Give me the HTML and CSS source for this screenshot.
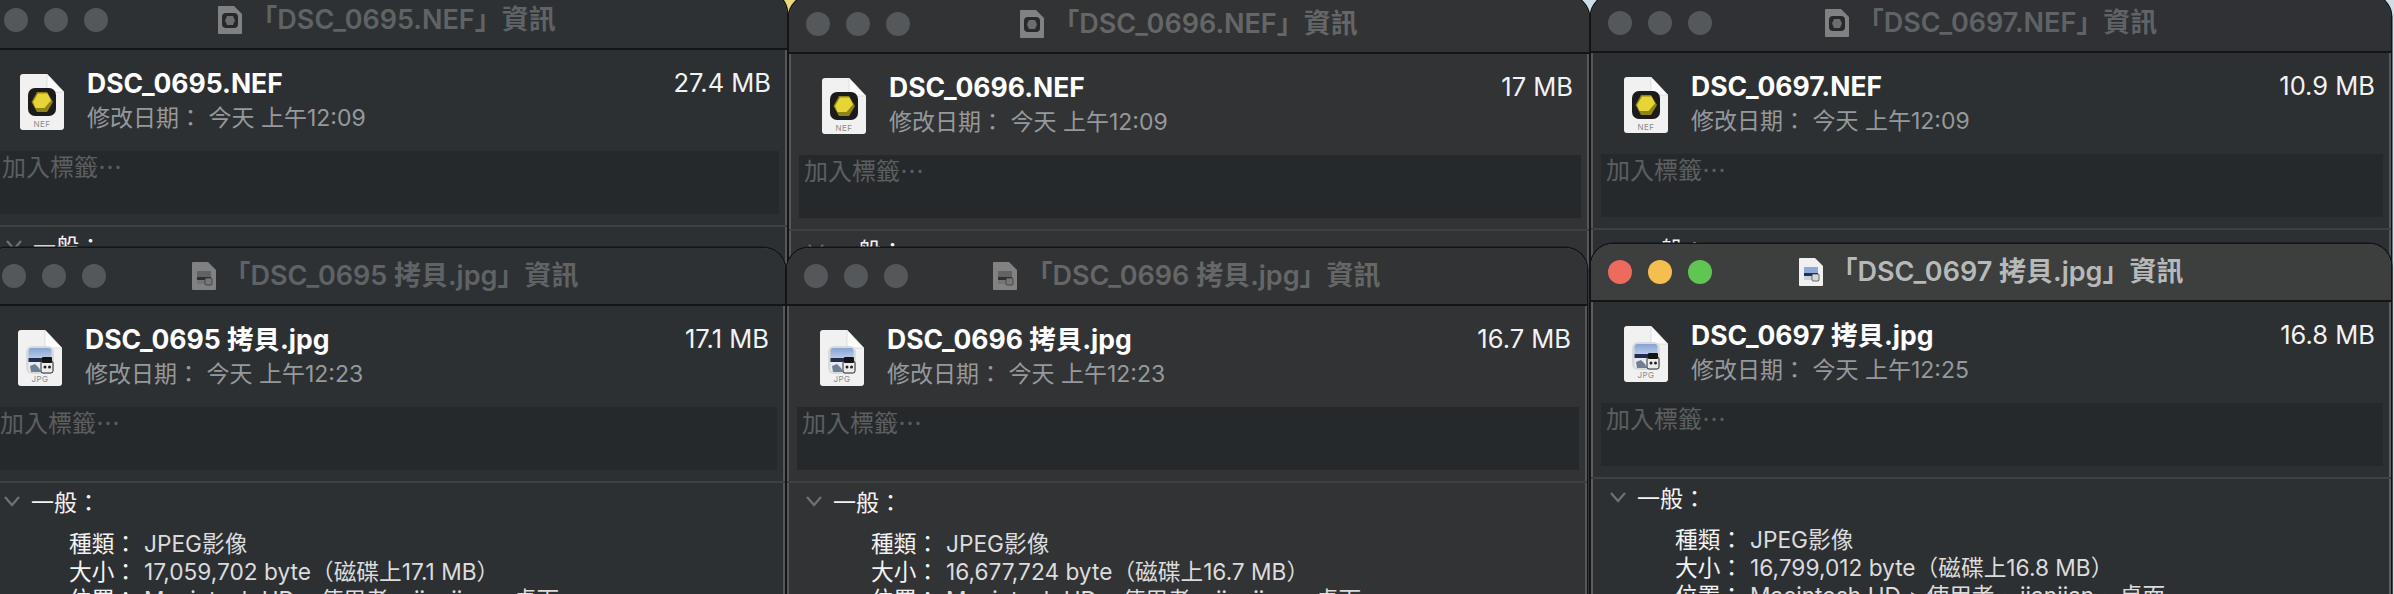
FILE: index.html
```html
<!DOCTYPE html>
<html lang="zh-Hant">
<head>
<meta charset="utf-8">
<title>資訊視窗</title>
<link rel="stylesheet" href="styles.css">
</head>
<body>
<svg class="defs" width="0" height="0" aria-hidden="true">
  <defs>
    <linearGradient id="sky" x1="0" y1="0" x2="0" y2="1">
      <stop offset="0" stop-color="#86a2d6"/>
      <stop offset="1" stop-color="#c5d3ea"/>
    </linearGradient>
    <symbol id="nef" viewBox="0 0 44 56">
      <path d="M2 0H27L44 18V53a3 3 0 0 1-3 3H3a3 3 0 0 1-3-3V3a3 3 0 0 1 3-3Z" fill="#f1f1f1"/>
      <path d="M27 0L44 18H30a3 3 0 0 1-3-3Z" fill="#fcfcfc" stroke="#cfcfcf" stroke-width=".6"/>
      <rect x="8" y="14" width="28" height="28" rx="7" fill="#1c1c1c"/>
      <path d="M17 18H27L33 28L27 38H17L11.500 28Z" fill="#8f8517"/>
      <path d="M18 19.500H27.500L31 26.500L24.500 34H15.500L13 28Z" fill="#e6d534"/>
      <text class="ext" x="22" y="53" text-anchor="middle">NEF</text>
    </symbol>
    <symbol id="jpg" viewBox="0 0 44 56">
      <path d="M2 0H27L44 18V53a3 3 0 0 1-3 3H3a3 3 0 0 1-3-3V3a3 3 0 0 1 3-3Z" fill="#f1f1f1"/>
      <path d="M27 0L44 18H30a3 3 0 0 1-3-3Z" fill="#fcfcfc" stroke="#cfcfcf" stroke-width=".6"/>
      <rect x="8" y="16" width="28" height="28" rx="6" fill="#d9dadc"/>
      <rect x="10.500" y="18" width="23" height="12" rx="3" fill="url(#sky)"/>
      <rect x="10.500" y="28" width="23" height="4" fill="#1f2f4d"/>
      <path d="M10.500 32H24V42H13a2.500 2.500 0 0 1-2.500-2.500Z" fill="#e7ebf0"/>
      <path d="M12 36L17 34L21 38L23 42H13Z" fill="#6f7f96"/>
      <rect x="23" y="31" width="12" height="12" rx="2" fill="#ececec" stroke="#2b2b2b" stroke-width="1"/>
      <rect x="24" y="27" width="10" height="6" rx="1" fill="#141414"/>
      <circle cx="27" cy="37" r="1.500" fill="#222"/>
      <circle cx="31.500" cy="37" r="1.500" fill="#222"/>
      <text class="ext" x="22" y="52" text-anchor="middle">JPG</text>
    </symbol>
    <symbol id="nef-mini" viewBox="0 0 24 28">
      <path d="M1 0H16L24 8V27a1 1 0 0 1-1 1H1a1 1 0 0 1-1-1V1a1 1 0 0 1 1-1Z" fill="#f0f0f0"/>
      <rect x="4" y="7" width="16" height="15" rx="4" fill="#1c1c1c"/>
      <path d="M9 10H15L17 14.500L15 19H9L7 14.500Z" fill="#d8c82e"/>
    </symbol>
    <symbol id="jpg-mini" viewBox="0 0 24 28">
      <path d="M1 0H16L24 8V27a1 1 0 0 1-1 1H1a1 1 0 0 1-1-1V1a1 1 0 0 1 1-1Z" fill="#f0f0f0"/>
      <rect x="5" y="9" width="14" height="8" fill="#8fa9db"/>
      <rect x="5" y="15" width="14" height="3" fill="#20324f"/>
      <rect x="5" y="18" width="9" height="4" fill="#c9d2df"/>
      <rect x="13" y="16" width="7" height="7" rx="1" fill="#d8d8d8" stroke="#333" stroke-width=".7"/>
    </symbol>
    <symbol id="chev" viewBox="0 0 18 12">
      <path d="M2 2L9 10L16 2" fill="none" stroke="currentColor" stroke-width="2.200"/>
    </symbol>
  </defs>
</svg>

<main class="desktop">
  <section class="win w1">
    <header class="titlebar">
      <div class="lights"><i class="dot"></i><i class="dot"></i><i class="dot"></i></div>
      <h1 class="title"><svg class="mini"><use href="#nef-mini"/></svg>「DSC_0695.NEF」資訊</h1>
    </header>
    <div class="head">
      <svg class="doc"><use href="#nef"/></svg>
      <div class="info"><strong class="name">DSC_0695.NEF</strong><span class="date">修改日期： 今天 上午12:09</span></div>
      <span class="size">27.4 MB</span>
    </div>
    <div class="tags">加入標籤⋯</div>
    <hr class="rule">
    <div class="section"><svg class="chev"><use href="#chev"/></svg>一般：</div>
  </section>

  <section class="win w2">
    <header class="titlebar">
      <div class="lights"><i class="dot"></i><i class="dot"></i><i class="dot"></i></div>
      <h1 class="title"><svg class="mini"><use href="#nef-mini"/></svg>「DSC_0696.NEF」資訊</h1>
    </header>
    <div class="head">
      <svg class="doc"><use href="#nef"/></svg>
      <div class="info"><strong class="name">DSC_0696.NEF</strong><span class="date">修改日期： 今天 上午12:09</span></div>
      <span class="size">17 MB</span>
    </div>
    <div class="tags">加入標籤⋯</div>
    <hr class="rule">
    <div class="section"><svg class="chev"><use href="#chev"/></svg>一般：</div>
  </section>

  <section class="win w3">
    <header class="titlebar">
      <div class="lights"><i class="dot"></i><i class="dot"></i><i class="dot"></i></div>
      <h1 class="title"><svg class="mini"><use href="#nef-mini"/></svg>「DSC_0697.NEF」資訊</h1>
    </header>
    <div class="head">
      <svg class="doc"><use href="#nef"/></svg>
      <div class="info"><strong class="name">DSC_0697.NEF</strong><span class="date">修改日期： 今天 上午12:09</span></div>
      <span class="size">10.9 MB</span>
    </div>
    <div class="tags">加入標籤⋯</div>
    <hr class="rule">
    <div class="section"><svg class="chev"><use href="#chev"/></svg>一般：</div>
  </section>

  <section class="win w4">
    <header class="titlebar">
      <div class="lights"><i class="dot"></i><i class="dot"></i><i class="dot"></i></div>
      <h1 class="title"><svg class="mini"><use href="#jpg-mini"/></svg>「DSC_0695 拷貝.jpg」資訊</h1>
    </header>
    <div class="head">
      <svg class="doc"><use href="#jpg"/></svg>
      <div class="info"><strong class="name">DSC_0695 拷貝.jpg</strong><span class="date">修改日期： 今天 上午12:23</span></div>
      <span class="size">17.1 MB</span>
    </div>
    <div class="tags">加入標籤⋯</div>
    <hr class="rule">
    <div class="section"><svg class="chev"><use href="#chev"/></svg>一般：</div>
    <dl class="props">
      <dt>種類：</dt><dd>JPEG影像</dd>
      <dt>大小：</dt><dd>17,059,702 byte（磁碟上17.1 MB）</dd>
      <dt>位置：</dt><dd>Macintosh HD ‣ 使用者 ‣ jianjian ‣ 桌面</dd>
    </dl>
  </section>

  <section class="win w5">
    <header class="titlebar">
      <div class="lights"><i class="dot"></i><i class="dot"></i><i class="dot"></i></div>
      <h1 class="title"><svg class="mini"><use href="#jpg-mini"/></svg>「DSC_0696 拷貝.jpg」資訊</h1>
    </header>
    <div class="head">
      <svg class="doc"><use href="#jpg"/></svg>
      <div class="info"><strong class="name">DSC_0696 拷貝.jpg</strong><span class="date">修改日期： 今天 上午12:23</span></div>
      <span class="size">16.7 MB</span>
    </div>
    <div class="tags">加入標籤⋯</div>
    <hr class="rule">
    <div class="section"><svg class="chev"><use href="#chev"/></svg>一般：</div>
    <dl class="props">
      <dt>種類：</dt><dd>JPEG影像</dd>
      <dt>大小：</dt><dd>16,677,724 byte（磁碟上16.7 MB）</dd>
      <dt>位置：</dt><dd>Macintosh HD ‣ 使用者 ‣ jianjian ‣ 桌面</dd>
    </dl>
  </section>

  <section class="win w6 active">
    <header class="titlebar">
      <div class="lights"><i class="dot red"></i><i class="dot yellow"></i><i class="dot green"></i></div>
      <h1 class="title"><svg class="mini"><use href="#jpg-mini"/></svg>「DSC_0697 拷貝.jpg」資訊</h1>
    </header>
    <div class="head">
      <svg class="doc"><use href="#jpg"/></svg>
      <div class="info"><strong class="name">DSC_0697 拷貝.jpg</strong><span class="date">修改日期： 今天 上午12:25</span></div>
      <span class="size">16.8 MB</span>
    </div>
    <div class="tags">加入標籤⋯</div>
    <hr class="rule">
    <div class="section"><svg class="chev"><use href="#chev"/></svg>一般：</div>
    <dl class="props">
      <dt>種類：</dt><dd>JPEG影像</dd>
      <dt>大小：</dt><dd>16,799,012 byte（磁碟上16.8 MB）</dd>
      <dt>位置：</dt><dd>Macintosh HD ‣ 使用者 ‣ jianjian ‣ 桌面</dd>
    </dl>
  </section>
</main>
</body>
</html>
```
FILE: styles.css
```css
* { box-sizing: border-box; }
html, body { margin: 0; height: 100%; }
body { overflow: hidden; background: #15171a; }
.defs { position: absolute; }
.desktop {
  position: relative;
  width: 2394px;
  height: 594px;
  overflow: hidden;
  background: linear-gradient(90deg, #e9d97c 0 1180px, #cfdde8 1180px 100%);
  font-family: "Inter", "Noto Sans CJK TC", sans-serif;
}
.win {
  position: absolute;
  width: 800px;
  height: 700px;
  display: flex;
  flex-direction: column;
  border-radius: 22px;
  overflow: hidden;
  background: var(--bg);
  box-shadow: 0 0 0 1.500px #121416, inset 0 0 0 2px #55585b;
  --bg: #2d3033;
  --bar: #2e3134;
  --title: #5f6366;
}
.w1 { left: -13px; top: -8px; }
.w2 { left: 789px; top: -4px; --bg: #323335; --bar: #323335; --title: #656667; }
.w3 { left: 1591px; top: -5px; --bar: #2f3134; }
.w4 { left: -15px; top: 248px; }
.w5 { left: 787px; top: 248px; --bg: #323335; --bar: #323335; --title: #656667; }
.w6 { left: 1591px; top: 244px; --bar: #3d3f3f; --title: #b7b9b9; box-shadow: 0 0 0 1.500px #121416, inset 0 0 0 2px #5c5e5f; }

.titlebar {
  flex: none;
  height: 58px;
  display: grid;
  grid-template-columns: 1fr auto 1fr;
  align-items: center;
  background: var(--bar);
  border-bottom: 2px solid #131517;
}
.lights { display: flex; gap: 16px; padding-left: 17px; }
.dot { width: 24px; height: 24px; border-radius: 50%; background: #55585b; }
.red { background: #ec6a5e; }
.yellow { background: #f4bf4f; }
.green { background: #61c554; }
.title {
  grid-column: 2;
  margin: 0;
  display: flex;
  align-items: center;
  gap: 8px;
  font-size: 27px;
  line-height: 34px;
  font-weight: 600;
  color: var(--title);
  white-space: nowrap;
}
.mini { flex: none; width: 24px; height: 28px; opacity: .42; filter: grayscale(1); }
.active .mini { opacity: 1; filter: none; }

.head {
  flex: none;
  height: 101px;
  display: flex;
  align-items: flex-start;
  padding: 16px 16px 0 33px;
}
.doc { flex: none; width: 44px; height: 56px; margin-top: 8px; margin-right: 23px; }
.ext { font: 8px "Inter", sans-serif; fill: #8a8a8a; letter-spacing: .4px; }
.info { flex: 1; display: flex; flex-direction: column; }
.name { font-size: 26.500px; line-height: 34px; font-weight: 700; color: #fff; }
.date { font-size: 23px; line-height: 36px; color: #96999b; }
.size { font-size: 25.500px; line-height: 34px; color: #f2f2f2; }

.tags {
  flex: none;
  height: 63px;
  margin: 0 8px 0 10px;
  padding: 0 5px;
  background: #26292b;
  color: #5b5f61;
  font-size: 24px;
  line-height: 34px;
}
.rule { flex: none; width: 100%; height: 2px; margin: 11px 0 0; border: 0; background: #3e4144; }
.section {
  flex: none;
  display: flex;
  align-items: center;
  gap: 10px;
  height: 36px;
  padding-left: 18px;
  font-size: 23px;
  color: #f2f2f2;
}
.chev { flex: none; width: 18px; height: 12px; color: #6f7275; }
.props {
  flex: none;
  display: grid;
  grid-template-columns: 75px 1fr;
  margin: 11px 0 0;
  padding-left: 84px;
  font-size: 22.700px;
  line-height: 28px;
}
.props dt { color: #f2f2f2; }
.props dd { margin: 0; color: #dcdcdc; }
```
